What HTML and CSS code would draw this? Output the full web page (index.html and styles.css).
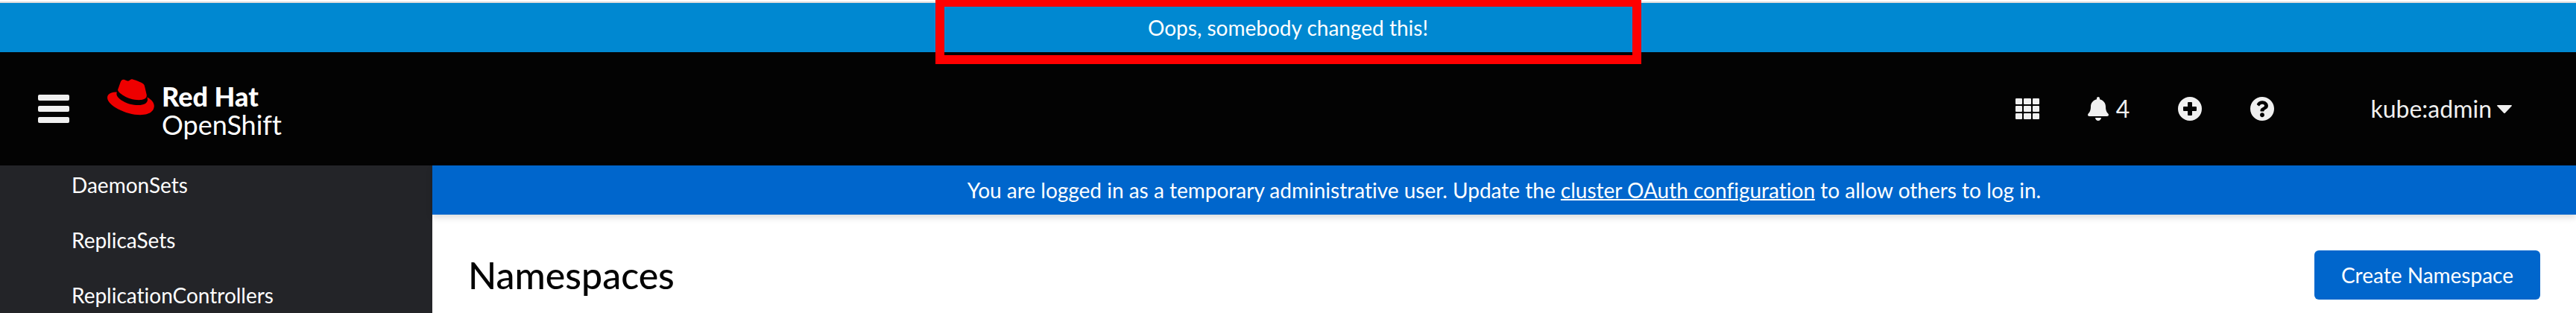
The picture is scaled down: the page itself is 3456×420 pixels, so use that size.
FILE: index.html
```html
<!DOCTYPE html>
<html lang="en">
<head>
<meta charset="utf-8">
<title>Namespaces · Red Hat OpenShift</title>
<link rel="stylesheet" href="styles.css">
</head>
<body>
<div class="notice"><p class="notice-text">Oops, somebody changed this!</p><div class="highlight"></div></div>
<header class="masthead">
  <button class="icon-button menu" type="button" aria-label="Toggle navigation">
    <svg width="42" height="38" viewBox="0 0 42 38"><rect width="42" height="8" rx="2"/><rect y="15" width="42" height="8" rx="2"/><rect y="30" width="42" height="8" rx="2"/></svg>
  </button>
  <a class="brand" href="#">
    <svg class="hat" width="64" height="49" viewBox="0 0 64 49"><path d="M42.500 28.200c4.200 0 10.300-.9 10.300-5.900 0-.4 0-.8-.1-1.200l-2.500-10.900c-.6-2.400-1.100-3.500-5.300-5.600C41.700 2.900 34.600.2 32.500.2c-2 0-2.500 2.500-4.800 2.500-2.200 0-3.900-1.900-6-1.900-2 0-3.300 1.400-4.300 4.200 0 0-2.800 7.900-3.200 9.100-.1.200-.1.500-.1.700 0 3.100 12.200 13.400 28.400 13.400M53.400 24.400c.6 2.700.6 3 .6 3.400 0 4.700-5.300 7.300-12.200 7.300-15.700 0-29.400-9.200-29.400-15.200 0-.8.200-1.700.5-2.400C7.200 17.700 0 18.700 0 25 0 35.400 24.600 48.200 44.100 48.200c15 0 18.700-6.800 18.700-12.100 0-4.200-3.600-9-9.400-11.700"/></svg>
    <span class="brand-name"><strong>Red Hat</strong><span>OpenShift</span></span>
  </a>
  <div class="tools">
    <button class="icon-button" type="button" aria-label="Applications">
      <svg width="32" height="28" viewBox="0 0 32 28"><rect width="9" height="8" rx="1"/><rect x="11" width="10" height="8" rx="1"/><rect x="23" width="9" height="8" rx="1"/><rect y="10" width="9" height="8" rx="1"/><rect x="11" y="10" width="10" height="8" rx="1"/><rect x="23" y="10" width="9" height="8" rx="1"/><rect y="20" width="9" height="8" rx="1"/><rect x="11" y="20" width="10" height="8" rx="1"/><rect x="23" y="20" width="9" height="8" rx="1"/></svg>
    </button>
    <button class="icon-button alerts" type="button" aria-label="4 notifications">
      <svg width="28" height="32" viewBox="0 0 448 512"><path d="M224 512c35.320 0 63.970-28.650 63.970-64H160.030c0 35.350 28.650 64 63.970 64zm215.390-149.710c-19.320-20.760-55.470-51.990-55.470-154.290 0-77.700-54.480-139.900-127.940-155.160V32c0-17.670-14.320-32-31.980-32s-31.980 14.330-31.980 32v20.840C118.560 68.100 64.080 130.300 64.080 208c0 102.300-36.150 133.530-55.470 154.290-6 6.450-8.660 14.160-8.610 21.710.11 16.400 12.980 32 32.100 32h383.800c19.120 0 32-15.600 32.100-32 .05-7.550-2.610-15.270-8.610-21.710z"/></svg>
      <span>4</span>
    </button>
    <button class="icon-button" type="button" aria-label="Add">
      <svg width="32" height="32" viewBox="0 0 32 32"><path fill-rule="evenodd" d="M16 0a16 16 0 1 0 0 32a16 16 0 1 0 0-32M14 7h4q1 0 1 1v5h5q1 0 1 1v4q0 1-1 1h-5v5q0 1-1 1h-4q-1 0-1-1v-5H8q-1 0-1-1v-4q0-1 1-1h5V8q0-1 1-1"/></svg>
    </button>
    <button class="icon-button" type="button" aria-label="Help">
      <svg width="32" height="32" viewBox="8 8 496 496"><path d="M504 256c0 136.997-111.043 248-248 248S8 392.997 8 256C8 119.083 119.043 8 256 8s248 111.083 248 248zM262.655 90c-54.497 0-89.255 22.957-116.549 63.758-3.536 5.286-2.353 12.415 2.715 16.258l34.699 26.310c5.205 3.947 12.621 3.008 16.665-2.122 17.864-22.658 30.113-35.797 57.303-35.797 20.429 0 45.698 13.148 45.698 32.958 0 14.976-12.363 22.667-32.534 33.976C247.128 238.528 216 254.941 216 296v4c0 6.627 5.373 12 12 12h56c6.627 0 12-5.373 12-12v-1.333c0-28.462 83.186-29.647 83.186-106.667 0-58.002-60.165-102-116.531-102zM256 338c-25.365 0-46 20.635-46 46 0 25.364 20.635 46 46 46s46-20.636 46-46c0-25.365-20.635-46-46-46z"/></svg>
    </button>
    <button class="icon-button user" type="button">kube:admin<svg width="20" height="11" viewBox="0 0 20 11"><path d="M1 0h18q1.500 0 .5 1.500l-8.500 9q-1 1-2 0l-8.500-9Q-.5 0 1 0"/></svg></button>
  </div>
</header>
<div class="shell">
  <nav class="sidebar" aria-label="Workloads">
    <a href="#">DaemonSets</a>
    <a href="#">ReplicaSets</a>
    <a href="#">ReplicationControllers</a>
  </nav>
  <main class="content">
    <p class="login-banner">You are logged in as a temporary administrative user. Update the <a href="#">cluster OAuth configuration</a> to allow others to log in.</p>
    <div class="page-heading">
      <h1>Namespaces</h1>
      <button class="primary" type="button">Create Namespace</button>
    </div>
  </main>
</div>
</body>
</html>
```
FILE: styles.css
```css
* { box-sizing: border-box; }
body {
  margin: 0;
  background: #fff;
  color: #030303;
  font: 28px/42px Lato, "Open Sans", sans-serif;
  font-variant-ligatures: none;
  min-height: 100vh;
  display: flex;
  flex-direction: column;
}
p, h1 { margin: 0; }
a { color: inherit; text-decoration: none; }
button { font: inherit; font-variant-ligatures: none; border: 0; cursor: pointer; }
svg { display: block; fill: currentColor; flex: none; }

.notice {
  position: relative;
  flex: none;
  margin-top: 2px;
  border-top: 2px solid #dcdcdc;
  background: #0088d1;
  color: #fff;
  padding: 12px;
  text-align: center;
}
.highlight {
  position: absolute;
  top: -7px;
  bottom: -16px;
  left: 1255px;
  width: 947px;
  border: 12px solid #f00;
}

.masthead {
  flex: none;
  display: flex;
  align-items: center;
  min-height: 152px;
  padding: 0 86px 0 51px;
  background: #030303;
  color: #f0f0f0;
}
.icon-button {
  display: flex;
  align-items: center;
  padding: 0;
  background: none;
  color: inherit;
  font-size: 32px;
}
.brand {
  display: flex;
  align-items: flex-start;
  gap: 9px;
  margin-left: 51px;
  color: #fff;
}
.hat { fill: #e00; }
.brand-name {
  display: flex;
  flex-direction: column;
  padding-top: 4px;
  font-size: 36px;
  line-height: 38px;
}
.brand-name strong { font-weight: 900; }
.tools { display: flex; align-items: center; margin-left: auto; gap: 65px; }
.alerts { gap: 10px; }
.user { margin-left: 64px; gap: 7px; }

.shell { flex: 1; display: flex; }
.sidebar {
  width: 580px;
  flex: none;
  display: flex;
  flex-direction: column;
  gap: 32px;
  padding: 5px 32px 0 96px;
  background: #232428;
  color: #fff;
}
.content { flex: 1; min-width: 0; }
.login-banner {
  padding: 12px;
  background: #06c;
  color: #fff;
  text-align: center;
  box-shadow: 0 4px 8px rgba(3, 3, 3, .14);
}
.login-banner a { text-decoration: underline; text-decoration-thickness: 2px; }
.page-heading {
  display: flex;
  align-items: center;
  justify-content: space-between;
  padding: 48px 48px 16px;
}
h1 { font-family: "Lato Medium", Lato, sans-serif; font-size: 50px; line-height: 62px; font-weight: 500; }
.primary {
  padding: 12px 36px;
  border-radius: 6px;
  background: #06c;
  color: #fff;
}
```
